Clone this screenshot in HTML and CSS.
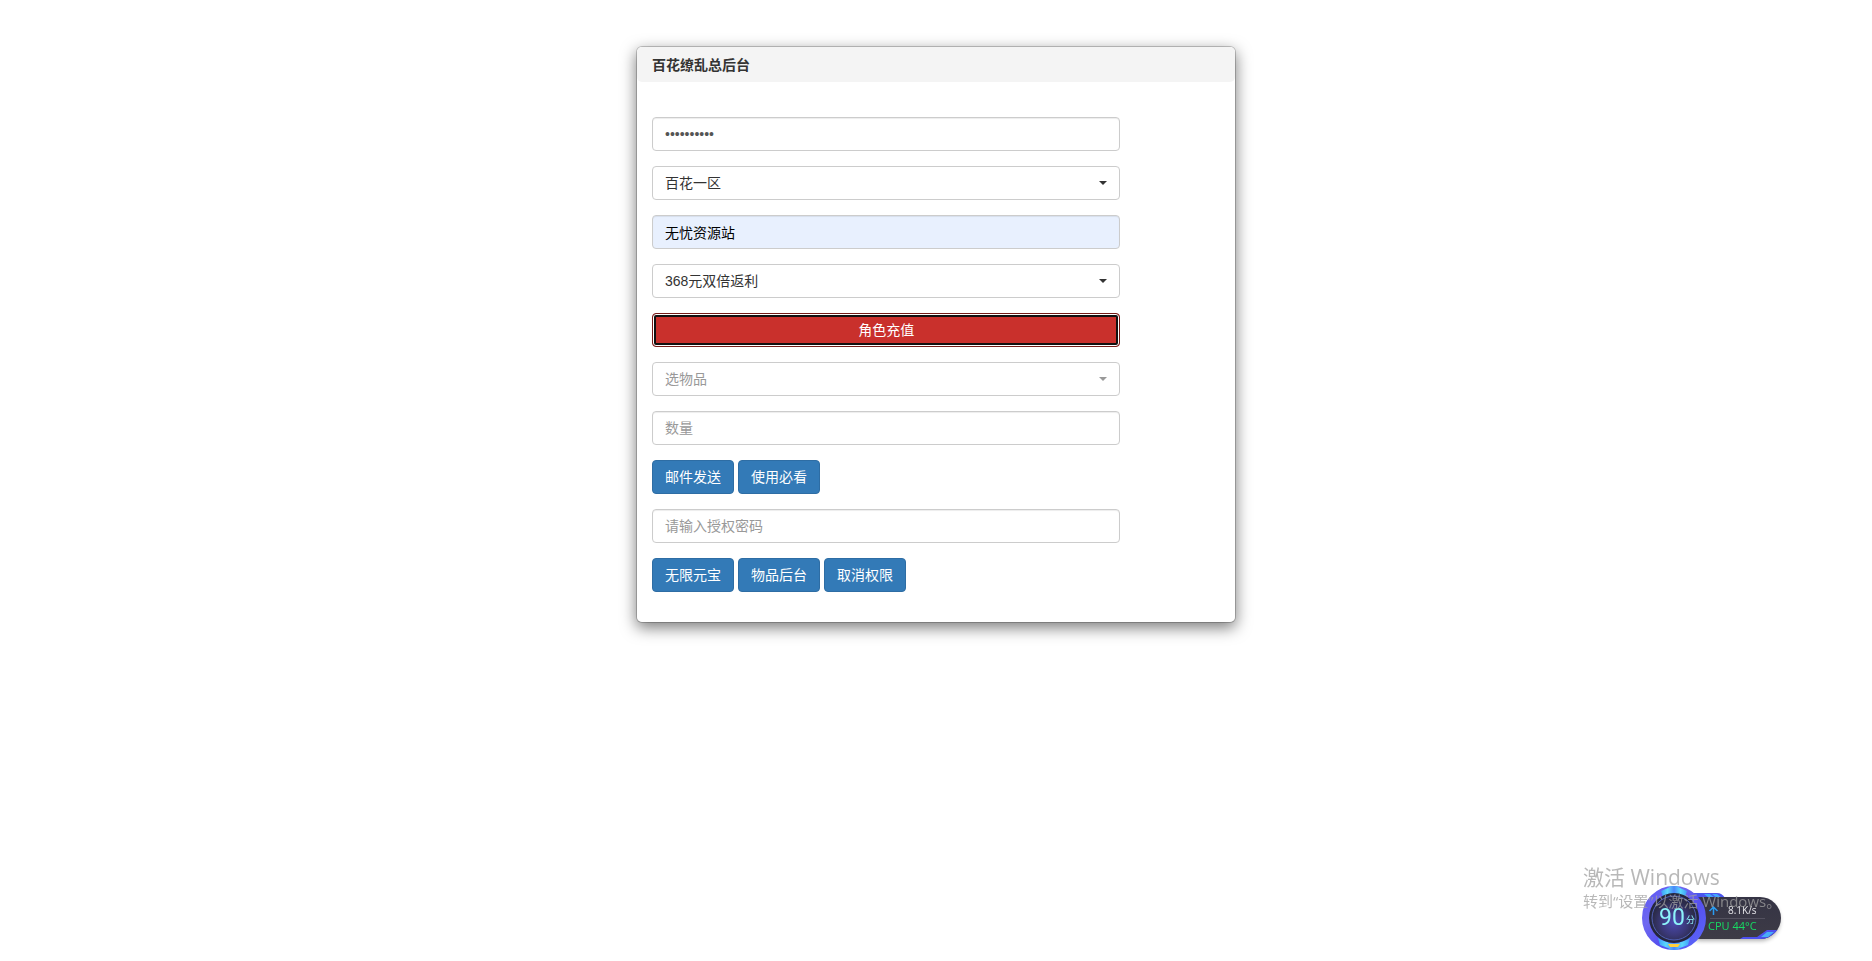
FILE: index.html
```html
<!DOCTYPE html>
<html lang="zh-CN">
<head>
  <meta charset="UTF-8" />
  <meta name="viewport" content="width=device-width, initial-scale=1.0" />
  <title>百花缭乱总后台</title>
  <link rel="stylesheet" href="styles.css">
</head>
<body>
  <main class="panel">
    <h1 class="panel-header">百花缭乱总后台</h1>
    <form class="panel-body">
      <input type="password" class="form-control" aria-label="GM密码" value="1234567890" />

      <div class="select-box">
        <select class="form-control" aria-label="选区">
          <option selected>百花一区</option>
        </select>
      </div>

      <input type="text" class="form-control autofill" aria-label="角色名" value="无忧资源站" />

      <div class="select-box">
        <select class="form-control" aria-label="充值类型">
          <option selected>368元双倍返利</option>
        </select>
      </div>

      <button type="button" class="btn btn-danger">角色充值</button>

      <div class="select-box empty">
        <select class="form-control" aria-label="选物品">
          <option selected>选物品</option>
        </select>
      </div>

      <input type="text" class="form-control" aria-label="数量" placeholder="数量" />

      <div class="btn-row">
        <button type="button" class="btn btn-primary">邮件发送</button>
        <button type="button" class="btn btn-primary">使用必看</button>
      </div>

      <input type="text" class="form-control" aria-label="授权密码" placeholder="请输入授权密码" />

      <div class="btn-row">
        <button type="button" class="btn btn-primary">无限元宝</button>
        <button type="button" class="btn btn-primary">物品后台</button>
        <button type="button" class="btn btn-primary">取消权限</button>
      </div>
    </form>
  </main>

  <!-- desktop monitor widget -->
  <svg class="monitor" width="148" height="72" viewBox="0 0 148 72" role="img" aria-label="系统监控">
    <defs>
      <linearGradient id="ring" x1="0" y1="0" x2="1" y2="1">
        <stop offset="0" stop-color="#5d58f6" />
        <stop offset="0.3" stop-color="#6f68f0" />
        <stop offset="0.6" stop-color="#5650ee" />
        <stop offset="1" stop-color="#5a66fa" />
      </linearGradient>
      <linearGradient id="cyan" x1="0" y1="0" x2="1" y2="0">
        <stop offset="0" stop-color="#3f9af8" />
        <stop offset="0.25" stop-color="#5ad8fc" />
        <stop offset="0.5" stop-color="#4a86f8" />
        <stop offset="0.75" stop-color="#5ad8fc" />
        <stop offset="1" stop-color="#3f9af8" />
      </linearGradient>
      <radialGradient id="dial" cx="0.5" cy="0.6">
        <stop offset="0" stop-color="#4c4ab0" />
        <stop offset="0.6" stop-color="#3a3878" />
        <stop offset="1" stop-color="#2b2b48" />
      </radialGradient>
      <linearGradient id="pill" x1="0" y1="0" x2="0" y2="1">
        <stop offset="0" stop-color="#353445" />
        <stop offset="1" stop-color="#3d3b46" />
      </linearGradient>
      <clipPath id="pill-clip"><rect x="40" y="15" width="101" height="42" rx="21" /></clipPath>
      <filter id="soft" x="-10%" y="-20%" width="120%" height="150%"><feGaussianBlur stdDeviation="2" /></filter>
    </defs>
    <rect x="42" y="18" width="98" height="41" rx="20" fill="#000" opacity="0.3" filter="url(#soft)" />
    <path d="M50 11h27q5 0 8 5H50z" fill="#4b55ee" />
    <path d="M64 12h6l5 4h-6zM72 12h5l5 4h-5z" fill="#43a5fa" />
    <rect x="40" y="15" width="101" height="42" rx="21" fill="url(#pill)" />
    <g clip-path="url(#pill-clip)">
      <path d="M100 57l3-2h14l10-7h20v10z" fill="#4c50ee" />
      <path d="M121 55l6-5h7l-6 5z" fill="#48aef9" />
    </g>
    <path d="M70 36.500h55" stroke="#53515f" />
    <circle cx="34" cy="36" r="28" fill="none" stroke="url(#ring)" stroke-width="8" />
    <path d="M21 9l7-3 3-2h6l3 2 7 3-2 6q-11-5-22 0z" fill="url(#cyan)" />
    <path d="M18 56q16 10 32 0l-2 7-8 3-3 2h-6l-3-2-8-3z" fill="url(#cyan)" />
    <circle cx="34" cy="36" r="25" fill="#25263c" />
    <circle cx="34" cy="36" r="22" fill="url(#dial)" stroke="#5161b8" />
    <path d="M28 62h12l-2 3h-8z" fill="#ffcf3d" />
    <text class="score" x="19" y="43">90</text>
    <text class="score-unit" x="46" y="41">分</text>
    <path d="M73.500 33v-8m-4 4l4-4 4 4" fill="none" stroke="#299cf2" stroke-width="1.500" />
    <text class="speed" x="88" y="32">8.1K/s</text>
    <text class="cpu" x="68" y="48">CPU 44°C</text>
  </svg>

  <div class="watermark">
    <p class="watermark-title">激活 Windows</p>
    <p class="watermark-text">转到“设置”以激活 Windows。</p>
  </div>
</body>
</html>
```

FILE: styles.css
```css
* {
  box-sizing: border-box;
}
body {
  margin: 0;
  padding: 46px 15px;
  background-color: #fff;
  color: #333;
  font-family: "Liberation Sans", "Noto Sans CJK SC", sans-serif;
  font-size: 14px;
  line-height: 20px;
}
.panel {
  max-width: 600px;
  margin: 0 auto;
  background-color: #fff;
  background-clip: padding-box;
  border: 1px solid rgba(0, 0, 0, 0.2);
  border-radius: 6px;
  box-shadow: 0 5px 15px rgba(0, 0, 0, 0.5);
}
.panel-header {
  display: flex;
  align-items: center;
  height: 35px;
  margin: 0;
  padding: 0 15px;
  background-color: #f4f4f4;
  border-radius: 5px;
  font-size: 14px;
  font-weight: bold;
}
.panel-body {
  display: flex;
  flex-direction: column;
  gap: 15px;
  width: calc(100% * 10 / 12);
  padding: 35px 15px 30px;
}
.form-control {
  display: block;
  width: 100%;
  height: 34px;
  margin: 0;
  padding: 6px 12px;
  background-color: #fff;
  border: 1px solid #ccc;
  border-radius: 4px;
  box-shadow: inset 0 1px 1px rgba(0, 0, 0, 0.075);
  color: #555;
  font-family: inherit;
  font-size: 14px;
  line-height: 20px;
}
.form-control::placeholder {
  color: #999;
  opacity: 1;
}
.autofill {
  background-color: #e8f0fe;
  color: #000;
}
.select-box {
  position: relative;
}
.select-box .form-control {
  appearance: none;
  box-shadow: none;
  color: #333;
}
/* caret */
.select-box::after {
  content: "";
  position: absolute;
  top: 15px;
  right: 13px;
  border-top: 4px solid #333;
  border-left: 4px solid transparent;
  border-right: 4px solid transparent;
  pointer-events: none;
}
.select-box.empty .form-control {
  color: #999;
}
.select-box.empty::after {
  border-top-color: #999;
}
.btn {
  height: 34px;
  margin: 0;
  padding: 6px 12px;
  border: 1px solid transparent;
  border-radius: 4px;
  color: #fff;
  font-family: inherit;
  font-size: 14px;
  line-height: 20px;
  cursor: pointer;
}
.btn-primary {
  background-color: #337ab7;
  border-color: #2e6da4;
}
.btn-danger {
  background-color: #c9302c;
  border-color: #761c19;
  box-shadow: inset 0 0 0 2px #fff;
  outline: 2px solid #101010;
  outline-offset: -4px;
}
.btn-row {
  display: flex;
  flex-wrap: wrap;
  gap: 4px;
}
.monitor {
  position: fixed;
  right: 84px;
  bottom: 7px;
}
.score {
  fill: #8df3fa;
  font-family: "Liberation Sans Narrow", Roboto, sans-serif;
  font-size: 23px;
}
.score-unit {
  fill: #8df3fa;
  font-family: "Noto Sans CJK SC", sans-serif;
  font-size: 9px;
}
.speed {
  fill: #e6e6ea;
  font-family: "Open Sans", sans-serif;
  font-size: 10px;
}
.cpu {
  fill: #17d963;
  font-family: "Open Sans", sans-serif;
  font-size: 11px;
}
.watermark {
  position: fixed;
  right: 93px;
  bottom: 49px;
  width: 196px;
  color: rgba(160, 160, 160, 0.75);
  font-family: "Open Sans", "Noto Sans CJK SC", sans-serif;
  white-space: nowrap;
  pointer-events: none;
}
.watermark p {
  margin: 0;
}
.watermark-title {
  font-size: 21px;
  line-height: 26px;
}
.watermark-text {
  font-size: 15px;
  line-height: 22px;
}
```
